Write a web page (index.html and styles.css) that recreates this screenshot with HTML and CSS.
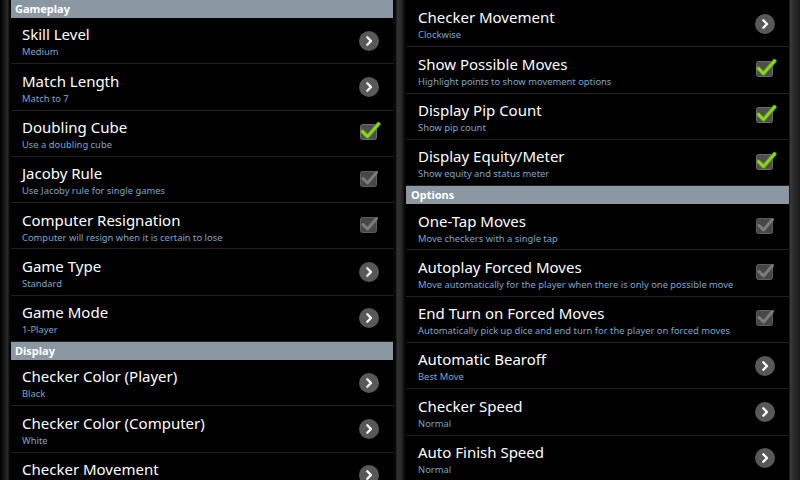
FILE: index.html
```html
<!DOCTYPE html>
<html>
<head>
<meta charset="utf-8">
<link rel="stylesheet" href="styles.css">
</head>
<body>
<div class="screen">
  <div class="gutter gutter-left"></div>
  <div class="panel">
    <div class="header">Gameplay</div>
    <div class="row"><div class="text"><div class="title">Skill Level</div><div class="sum">Medium</div></div><svg class="arrow" viewBox="0 0 20 20"><circle cx="10" cy="10" r="10" fill="#585858"/><path d="M8.3 6.2 L12 10 L8.3 13.8" fill="none" stroke="#fff" stroke-width="2.3" stroke-linecap="round" stroke-linejoin="round"/></svg></div>
    <div class="row"><div class="text"><div class="title">Match Length</div><div class="sum">Match to 7</div></div><svg class="arrow" viewBox="0 0 20 20"><circle cx="10" cy="10" r="10" fill="#585858"/><path d="M8.3 6.2 L12 10 L8.3 13.8" fill="none" stroke="#fff" stroke-width="2.3" stroke-linecap="round" stroke-linejoin="round"/></svg></div>
    <div class="row"><div class="text"><div class="title">Doubling Cube</div><div class="sum">Use a doubling cube</div></div><svg class="check" viewBox="0 0 22 22"><rect x="1.5" y="4.5" width="16" height="15" rx="2" fill="#4e4e4e" stroke="#6c6c6c"/><path d="M3.5 11.5 L8.5 16.5 L19.5 4" fill="none" stroke="#5e9a10" stroke-width="4.2" stroke-linecap="round" stroke-linejoin="round"/><path d="M3.5 11.5 L8.5 16.5 L19.5 4" fill="none" stroke="#8fd42a" stroke-width="2.6" stroke-linecap="round" stroke-linejoin="round"/></svg></div>
    <div class="row"><div class="text"><div class="title">Jacoby Rule</div><div class="sum">Use Jacoby rule for single games</div></div><svg class="check" viewBox="0 0 22 22"><rect x="1.5" y="4.5" width="16" height="15" rx="2" fill="#474747" stroke="#5e5e5e"/><path d="M4 11.5 L8.5 16 L17.5 5.5" fill="none" stroke="#7c7c7c" stroke-width="3" stroke-linecap="round" stroke-linejoin="round"/></svg></div>
    <div class="row"><div class="text"><div class="title">Computer Resignation</div><div class="sum">Computer will resign when it is certain to lose</div></div><svg class="check" viewBox="0 0 22 22"><rect x="1.5" y="4.5" width="16" height="15" rx="2" fill="#474747" stroke="#5e5e5e"/><path d="M4 11.5 L8.5 16 L17.5 5.5" fill="none" stroke="#7c7c7c" stroke-width="3" stroke-linecap="round" stroke-linejoin="round"/></svg></div>
    <div class="row"><div class="text"><div class="title">Game Type</div><div class="sum">Standard</div></div><svg class="arrow" viewBox="0 0 20 20"><circle cx="10" cy="10" r="10" fill="#585858"/><path d="M8.3 6.2 L12 10 L8.3 13.8" fill="none" stroke="#fff" stroke-width="2.3" stroke-linecap="round" stroke-linejoin="round"/></svg></div>
    <div class="row"><div class="text"><div class="title">Game Mode</div><div class="sum">1-Player</div></div><svg class="arrow" viewBox="0 0 20 20"><circle cx="10" cy="10" r="10" fill="#585858"/><path d="M8.3 6.2 L12 10 L8.3 13.8" fill="none" stroke="#fff" stroke-width="2.3" stroke-linecap="round" stroke-linejoin="round"/></svg></div>
    <div class="header">Display</div>
    <div class="row"><div class="text"><div class="title">Checker Color (Player)</div><div class="sum">Black</div></div><svg class="arrow" viewBox="0 0 20 20"><circle cx="10" cy="10" r="10" fill="#585858"/><path d="M8.3 6.2 L12 10 L8.3 13.8" fill="none" stroke="#fff" stroke-width="2.3" stroke-linecap="round" stroke-linejoin="round"/></svg></div>
    <div class="row"><div class="text"><div class="title">Checker Color (Computer)</div><div class="sum">White</div></div><svg class="arrow" viewBox="0 0 20 20"><circle cx="10" cy="10" r="10" fill="#585858"/><path d="M8.3 6.2 L12 10 L8.3 13.8" fill="none" stroke="#fff" stroke-width="2.3" stroke-linecap="round" stroke-linejoin="round"/></svg></div>
    <div class="row"><div class="text"><div class="title">Checker Movement</div><div class="sum">Clockwise</div></div><svg class="arrow" viewBox="0 0 20 20"><circle cx="10" cy="10" r="10" fill="#585858"/><path d="M8.3 6.2 L12 10 L8.3 13.8" fill="none" stroke="#fff" stroke-width="2.3" stroke-linecap="round" stroke-linejoin="round"/></svg></div>
  </div>
  <div class="gutter gutter-mid"></div>
  <div class="panel panel-right">
    <div class="row"><div class="text"><div class="title">Checker Movement</div><div class="sum">Clockwise</div></div><svg class="arrow" viewBox="0 0 20 20"><circle cx="10" cy="10" r="10" fill="#585858"/><path d="M8.3 6.2 L12 10 L8.3 13.8" fill="none" stroke="#fff" stroke-width="2.3" stroke-linecap="round" stroke-linejoin="round"/></svg></div>
    <div class="row"><div class="text"><div class="title">Show Possible Moves</div><div class="sum">Highlight points to show movement options</div></div><svg class="check" viewBox="0 0 22 22"><rect x="1.5" y="4.5" width="16" height="15" rx="2" fill="#4e4e4e" stroke="#6c6c6c"/><path d="M3.5 11.5 L8.5 16.5 L19.5 4" fill="none" stroke="#5e9a10" stroke-width="4.2" stroke-linecap="round" stroke-linejoin="round"/><path d="M3.5 11.5 L8.5 16.5 L19.5 4" fill="none" stroke="#8fd42a" stroke-width="2.6" stroke-linecap="round" stroke-linejoin="round"/></svg></div>
    <div class="row"><div class="text"><div class="title">Display Pip Count</div><div class="sum">Show pip count</div></div><svg class="check" viewBox="0 0 22 22"><rect x="1.5" y="4.5" width="16" height="15" rx="2" fill="#4e4e4e" stroke="#6c6c6c"/><path d="M3.5 11.5 L8.5 16.5 L19.5 4" fill="none" stroke="#5e9a10" stroke-width="4.2" stroke-linecap="round" stroke-linejoin="round"/><path d="M3.5 11.5 L8.5 16.5 L19.5 4" fill="none" stroke="#8fd42a" stroke-width="2.6" stroke-linecap="round" stroke-linejoin="round"/></svg></div>
    <div class="row"><div class="text"><div class="title">Display Equity/Meter</div><div class="sum">Show equity and status meter</div></div><svg class="check" viewBox="0 0 22 22"><rect x="1.5" y="4.5" width="16" height="15" rx="2" fill="#4e4e4e" stroke="#6c6c6c"/><path d="M3.5 11.5 L8.5 16.5 L19.5 4" fill="none" stroke="#5e9a10" stroke-width="4.2" stroke-linecap="round" stroke-linejoin="round"/><path d="M3.5 11.5 L8.5 16.5 L19.5 4" fill="none" stroke="#8fd42a" stroke-width="2.6" stroke-linecap="round" stroke-linejoin="round"/></svg></div>
    <div class="header">Options</div>
    <div class="row"><div class="text"><div class="title">One-Tap Moves</div><div class="sum">Move checkers with a single tap</div></div><svg class="check" viewBox="0 0 22 22"><rect x="1.5" y="4.5" width="16" height="15" rx="2" fill="#474747" stroke="#5e5e5e"/><path d="M4 11.5 L8.5 16 L17.5 5.5" fill="none" stroke="#7c7c7c" stroke-width="3" stroke-linecap="round" stroke-linejoin="round"/></svg></div>
    <div class="row"><div class="text"><div class="title">Autoplay Forced Moves</div><div class="sum">Move automatically for the player when there is only one possible move</div></div><svg class="check" viewBox="0 0 22 22"><rect x="1.5" y="4.5" width="16" height="15" rx="2" fill="#474747" stroke="#5e5e5e"/><path d="M4 11.5 L8.5 16 L17.5 5.5" fill="none" stroke="#7c7c7c" stroke-width="3" stroke-linecap="round" stroke-linejoin="round"/></svg></div>
    <div class="row"><div class="text"><div class="title">End Turn on Forced Moves</div><div class="sum">Automatically pick up dice and end turn for the player on forced moves</div></div><svg class="check" viewBox="0 0 22 22"><rect x="1.5" y="4.5" width="16" height="15" rx="2" fill="#474747" stroke="#5e5e5e"/><path d="M4 11.5 L8.5 16 L17.5 5.5" fill="none" stroke="#7c7c7c" stroke-width="3" stroke-linecap="round" stroke-linejoin="round"/></svg></div>
    <div class="row"><div class="text"><div class="title">Automatic Bearoff</div><div class="sum">Best Move</div></div><svg class="arrow" viewBox="0 0 20 20"><circle cx="10" cy="10" r="10" fill="#585858"/><path d="M8.3 6.2 L12 10 L8.3 13.8" fill="none" stroke="#fff" stroke-width="2.3" stroke-linecap="round" stroke-linejoin="round"/></svg></div>
    <div class="row"><div class="text"><div class="title">Checker Speed</div><div class="sum">Normal</div></div><svg class="arrow" viewBox="0 0 20 20"><circle cx="10" cy="10" r="10" fill="#585858"/><path d="M8.3 6.2 L12 10 L8.3 13.8" fill="none" stroke="#fff" stroke-width="2.3" stroke-linecap="round" stroke-linejoin="round"/></svg></div>
    <div class="row"><div class="text"><div class="title">Auto Finish Speed</div><div class="sum">Normal</div></div><svg class="arrow" viewBox="0 0 20 20"><circle cx="10" cy="10" r="10" fill="#585858"/><path d="M8.3 6.2 L12 10 L8.3 13.8" fill="none" stroke="#fff" stroke-width="2.3" stroke-linecap="round" stroke-linejoin="round"/></svg></div>
  </div>
  <div class="gutter gutter-right"></div>
</div>
</body>
</html>
```
FILE: styles.css
```css
html, body {
  margin: 0;
  padding: 0;
  background: #000;
}
body {
  width: 800px;
  height: 480px;
  overflow: hidden;
  font-family: "Noto Sans", "Open Sans", "DejaVu Sans", sans-serif;
}
.screen {
  display: flex;
  width: 800px;
  height: 480px;
  overflow: hidden;
}
.gutter { flex: none; height: 480px; }
.gutter-left {
  width: 11px;
  background: linear-gradient(to right, #000 0px, #111 3px, #2c2c2c 8px, #0a0a0a 9px, #000 11px);
}
.gutter-mid {
  width: 13px;
  background: linear-gradient(to right, #050505 0px, #0d0d0d 3px, #333 4px, #2a2a2a 8px, #1a1a1a 10px, #050505 12px, #000 13px);
}
.gutter-right {
  width: 11px;
  background: linear-gradient(to right, #000 0px, #3a3a3a 1px, #2a2a2a 5px, #1c1c1c 11px);
}
.panel {
  flex: none;
  width: 382px;
  height: 480px;
  overflow: hidden;
  background: #000;
}
.panel-right {
  width: 383px;
  padding-top: 1px;
  box-sizing: border-box;
}
.header {
  height: 18px;
  line-height: 18px;
  background: #8b97a3;
  color: #fff;
  font-size: 11px;
  font-weight: bold;
  padding-left: 4px;
}
.panel-right .header { padding-left: 5px; }
.row {
  box-sizing: border-box;
  height: 46.3px;
  border-bottom: 1px solid #222;
  display: flex;
  align-items: center;
  padding: 0 14px 0 11px;
}
.panel-right .row { padding-left: 12px; }
.text {
  flex: 1;
  min-width: 0;
  margin-top: 4.5px;
}
.title {
  color: #fff;
  font-size: 15px;
  line-height: 19px;
  white-space: nowrap;
}
.sum {
  color: #7ea5cb;
  font-size: 9.4px;
  line-height: 16px;
  white-space: nowrap;
}
.arrow {
  flex: none;
  width: 20px;
  height: 20px;
}
.check {
  flex: none;
  width: 22px;
  height: 22px;
  margin-right: -2px;
  margin-top: -4px;
}
```
